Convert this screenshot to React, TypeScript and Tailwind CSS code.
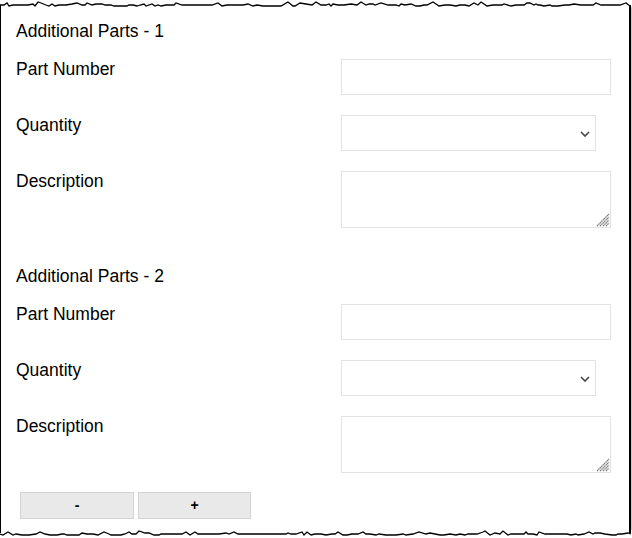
import React from "react";

// jagged "torn paper" edge, deterministic
function tornPath(width: number, base: number, amp: number, seed: number) {
  let s = seed;
  const rnd = () => {
    s = (s * 9301 + 49297) % 233280;
    return s / 233280;
  };
  const pts: string[] = [];
  let x = 0;
  let y = base;
  pts.push(`${x},${y}`);
  while (x < width) {
    x += 2 + Math.round(rnd() * 5);
    const r = rnd();
    if (r < 0.35) y = base;
    else if (r < 0.6) y = base - Math.round(rnd() * amp);
    else y = base + Math.round(rnd() * (amp / 2));
    pts.push(`${Math.min(x, width)},${y}`);
  }
  return pts.join(" ");
}

function TopEdge() {
  return (
    <svg width="632" height="10" className="block shrink-0">
      <polyline
        points={tornPath(630, 5, 3, 7)}
        fill="none"
        stroke="#000"
        strokeWidth="1.3"
      />
      <line x1="0.5" y1="5" x2="0.5" y2="10" stroke="#000" strokeWidth="1" />
      <line x1="630" y1="5" x2="630" y2="10" stroke="#000" strokeWidth="2" />
      <line x1="631.5" y1="7" x2="631.5" y2="10" stroke="#c8c8c8" strokeWidth="1" />
    </svg>
  );
}

function BottomEdge() {
  return (
    <svg width="632" height="8" className="block shrink-0">
      <line x1="0.5" y1="0" x2="0.5" y2="3" stroke="#000" strokeWidth="1" />
      <line x1="630" y1="0" x2="630" y2="3" stroke="#000" strokeWidth="2" />
      <polyline
        points={tornPath(631, 4, 3, 23)}
        fill="none"
        stroke="#000"
        strokeWidth="1.3"
      />
    </svg>
  );
}

function Row({ label, children }: { label: string; children: React.ReactNode }) {
  return (
    <div className="flex items-start">
      <div className="w-[325px] leading-[20px]">{label}</div>
      {children}
    </div>
  );
}

function PartBlock({ n }: { n: number }) {
  return (
    <div className="flex flex-col gap-[20px]">
      <div className="leading-[20px] pt-[2px] -mb-[2px]">Additional Parts - {n}</div>
      <Row label="Part Number">
        <input
          type="text"
          className="w-[270px] h-[36px] border border-[#e2e2e2] bg-white outline-none px-2"
        />
      </Row>
      <Row label="Quantity">
        <div className="relative w-[255px] h-[36px]">
          <select className="appearance-none w-full h-full border border-[#e2e2e2] bg-white outline-none px-2">
            <option></option>
          </select>
          <svg
            width="10"
            height="6"
            viewBox="0 0 10 6"
            className="absolute right-[6px] top-[16px] pointer-events-none"
          >
            <path d="M1 1 L5 5 L9 1" fill="none" stroke="#444" strokeWidth="1.6" />
          </svg>
        </div>
      </Row>
      <Row label="Description">
        <div className="relative w-[270px] h-[57px]">
          <textarea className="block w-full h-full resize-none border border-[#e2e2e2] bg-white outline-none px-2" />
          <svg
            width="14"
            height="14"
            viewBox="0 0 14 14"
            className="absolute right-[1px] bottom-[1px] pointer-events-none"
          >
            <g stroke="#7a7a7a" strokeWidth="1.3" strokeDasharray="1.5 0.5">
              <line x1="1" y1="13" x2="13" y2="1" />
              <line x1="4" y1="13" x2="13" y2="4" />
              <line x1="7" y1="13" x2="13" y2="7" />
              <line x1="10" y1="13" x2="13" y2="10" />
            </g>
          </svg>
        </div>
      </Row>
    </div>
  );
}

export default function App() {
  return (
    <div
      className="w-[632px] h-[538px] flex flex-col bg-white text-[17.5px] text-black"
      style={{ fontFamily: '"Liberation Sans", Arial, sans-serif' }}
    >
      <TopEdge />
      <div className="flex-1 flex">
        <div className="flex-1 border-l border-black pl-[15px] pt-[9px] flex flex-col">
          <PartBlock n={1} />
          <div className="h-[36px] shrink-0" />
          <PartBlock n={2} />
          <div className="flex gap-[4px] mt-[19px] ml-[4px]">
            <button className="w-[114px] h-[27px] bg-[#e9e9e9] border border-[#d3d3d3] text-[14px] font-bold">
              -
            </button>
            <button className="w-[113px] h-[27px] bg-[#e9e9e9] border border-[#d3d3d3] text-[14px] font-bold">
              +
            </button>
          </div>
        </div>
        <div className="w-[2px] bg-black" />
        <div className="w-[1px] bg-[#c8c8c8]" />
      </div>
      <BottomEdge />
    </div>
  );
}
